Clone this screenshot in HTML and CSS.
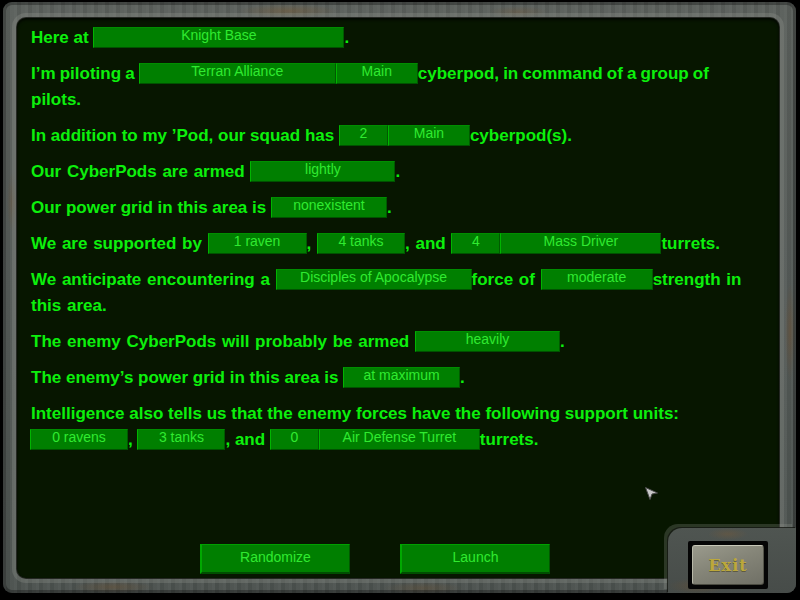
FILE: index.html
```html
<!DOCTYPE html>
<html>
<head>
<meta charset="utf-8">
<link rel="stylesheet" href="styles.css">
</head>
<body>
<div class="frame">
  <div class="panel">
    <div class="briefing">
      <p>Here at <span class="field w251">Knight Base</span>.</p>
      <p class="tight">I’m piloting a <span class="field w197">Terran Alliance</span><span class="field w82">Main</span>cyberpod, in command of a group of pilots.</p>
      <p>In addition to my ’Pod, our squad has <span class="field w49">2</span><span class="field w82">Main</span>cyberpod(s).</p>
      <p class="wide">Our CyberPods are armed <span class="field w145">lightly</span>.</p>
      <p>Our power grid in this area is <span class="field w116">nonexistent</span>.</p>
      <p class="wide">We are supported by <span class="field w99">1 raven</span>, <span class="field w88">4 tanks</span>, and <span class="field w49">4</span><span class="field w161">Mass Driver</span>turrets.</p>
      <p class="wide">We anticipate encountering a <span class="field w196">Disciples of Apocalypse</span>force of <span class="field w112">moderate</span>strength in this area.</p>
      <p class="wide">The enemy CyberPods will probably be armed <span class="field w145">heavily</span>.</p>
      <p>The enemy’s power grid in this area is <span class="field w117">at maximum</span>.</p>
      <p>Intelligence also tells us that the enemy forces have the following support units: <span class="field w98 first">0 ravens</span>, <span class="field w88">3 tanks</span>, and <span class="field w49">0</span><span class="field w161">Air Defense Turret</span>turrets.</p>
    </div>
    <div class="actions">
      <button class="btn">Randomize</button>
      <button class="btn">Launch</button>
    </div>
  </div>
  <div class="notch">
    <div class="exit-well"><button class="exit">Exit</button></div>
  </div>
</div>
<svg class="cursor" width="14" height="14" viewBox="0 0 14 14"><polygon points="0.5,0.5 12.5,6 7,7 5,12.5" fill="#c8c8c8" stroke="#4a4a4a" stroke-width="1"/></svg>
</body>
</html>
```
FILE: styles.css
```css
html, body {
  margin: 0;
  padding: 0;
  background: #000;
  width: 800px;
  height: 600px;
  overflow: hidden;
  position: relative;
}

.frame {
  position: relative;
  box-sizing: border-box;
  width: 793px;
  height: 591px;
  margin: 2px 0 0 3px;
  padding: 16px 17px 15px 14px;
  border-radius: 9px;
  background:
    radial-gradient(ellipse 50px 7px at 285px 9px, rgba(120,90,50,.45), transparent),
    radial-gradient(ellipse 30px 6px at 515px 10px, rgba(115,88,55,.35), transparent),
    radial-gradient(ellipse 40px 6px at 110px 585px, rgba(110,80,45,.4), transparent),
    radial-gradient(ellipse 40px 6px at 420px 586px, rgba(105,78,45,.35), transparent),
    radial-gradient(ellipse 5px 30px at 9px 200px, rgba(110,80,45,.35), transparent),
    radial-gradient(ellipse 5px 50px at 787px 330px, rgba(115,80,45,.45), transparent),
    repeating-linear-gradient(90deg, rgba(255,255,255,.04) 0 3px, rgba(0,0,0,.05) 3px 7px, rgba(255,255,255,.02) 7px 11px),
    linear-gradient(180deg, #5b605c 0%, #555b58 50%, #4c524f 100%);
  box-shadow: inset 0 0 0 3px rgba(0,0,0,.3);
}

.panel {
  box-sizing: border-box;
  height: 560px;
  background: #071600;
  border-radius: 9px;
  display: flex;
  flex-direction: column;
  box-shadow: 0 0 0 1px rgba(20,22,18,.8), 0 0 0 5px rgba(150,156,148,.28), inset 0 2px 3px rgba(0,0,0,.7);
}

.briefing {
  padding: 7px 19px 0 14px;
  font-family: "Liberation Sans", Arial, sans-serif;
  font-weight: bold;
  font-size: 17px;
  line-height: 26px;
  color: #0cf00c;
}

.briefing p {
  margin: 0 0 10px;
}
.briefing p.wide { word-spacing: 1px; }
.briefing p.tight { word-spacing: -0.6px; }

.field {
  display: inline-block;
  box-sizing: border-box;
  height: 21px;
  vertical-align: 3px;
  background: #007f00;
  border-style: solid;
  border-width: 1px;
  border-color: #008e00 #005a00 #005200 #00b400;
  color: #30ea30;
  font-weight: normal;
  font-size: 14px;
  line-height: 14px;
  text-align: center;
  white-space: nowrap;
  word-spacing: 0;
}
.field.first { margin-left: -1px; }

.w49 { width: 49px; }
.w82 { width: 82px; }
.w88 { width: 88px; }
.w98 { width: 98px; }
.w99 { width: 99px; }
.w112 { width: 112px; }
.w116 { width: 116px; }
.w117 { width: 117px; }
.w145 { width: 145px; }
.w161 { width: 161px; }
.w196 { width: 196px; }
.w197 { width: 197px; }
.w251 { width: 251px; }

.actions {
  margin-top: auto;
  display: flex;
  gap: 50px;
  padding: 0 0 4px 183px;
}

.btn {
  box-sizing: border-box;
  width: 150px;
  height: 30px;
  margin: 0;
  padding: 0 0 4px;
  background: #007f00;
  border-style: solid;
  border-width: 1px 1px 2px 2px;
  border-color: #00a000 #005800 #004e00 #00a800;
  color: #30ea30;
  font-family: "Liberation Sans", Arial, sans-serif;
  font-size: 14px;
  line-height: 14px;
  text-align: center;
}

.notch {
  position: absolute;
  left: 665px;
  top: 526px;
  right: 0;
  bottom: 0;
  box-sizing: border-box;
  padding: 13px 0 0 20px;
  border-top-left-radius: 14px;
  border-bottom-right-radius: 9px;
  background:
    radial-gradient(ellipse 20px 6px at 60px 6px, rgba(120,90,55,.4), transparent),
    radial-gradient(ellipse 30px 8px at 30px 58px, rgba(110,80,45,.4), transparent),
    linear-gradient(180deg, #4f5551 0%, #474c49 100%);
  box-shadow: -1px -1px 0 rgba(20,22,18,.8), -4px -4px 0 rgba(150,156,148,.25);
}

.exit-well {
  box-sizing: border-box;
  width: 80px;
  height: 48px;
  padding: 4px;
  background: #050505;
  border-radius: 2px;
}

.exit {
  box-sizing: border-box;
  width: 72px;
  height: 40px;
  margin: 0;
  padding: 0;
  border-style: solid;
  border-width: 1px;
  border-color: #c8c8b8 #55554a #4a4a40 #b8b8a8;
  border-radius: 3px;
  background: linear-gradient(160deg, #9a9a8c 0%, #858578 45%, #707066 100%);
  color: #bca83a;
  font-family: "DejaVu Serif", "Liberation Serif", serif;
  font-weight: bold;
  font-size: 16px;
  letter-spacing: 1px;
  text-shadow: 0 1px 0 rgba(60,55,20,.5);
}

.cursor {
  position: absolute;
  left: 645px;
  top: 487px;
}
```
